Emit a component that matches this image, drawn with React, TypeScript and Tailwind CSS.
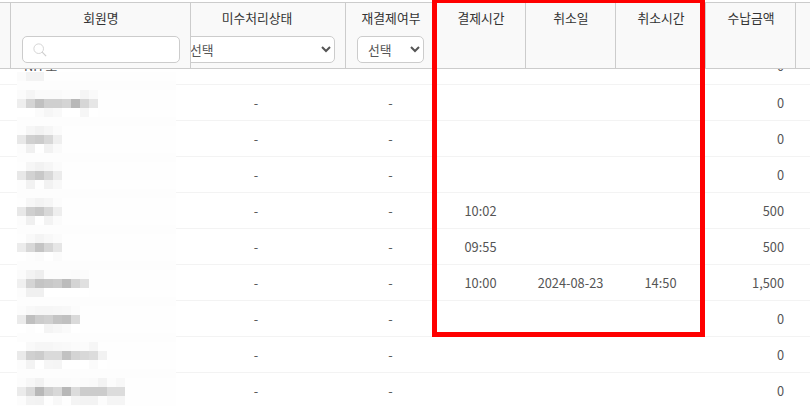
const cols = "grid grid-cols-[10px_180px_155px_90px_90px_90px_90px_90px_15px]";

type Row = { pay?: string; cancelDate?: string; cancelTime?: string; amount: string };

const rows: Row[] = [
  { amount: "0" },
  { amount: "0" },
  { amount: "0" },
  { pay: "10:02", amount: "500" },
  { pay: "09:55", amount: "500" },
  { pay: "10:00", cancelDate: "2024-08-23", cancelTime: "14:50", amount: "1,500" },
  { amount: "0" },
  { amount: "0" },
  { amount: "0" },
];

const mosaic: string[][][] = [
  [["fb","f5","fa","fa","fa","fc","fc","f5","fa"],["ee","d4","c0","cf","cf","d4","b8","d6","e6"],["ff","ff","fb","f6","f9","ff","ff","f6","ff"]],
  [["fd","f6","f2","f6","fb"],["e8","d0","cc","d8","ef"],["fc","f0","ff","f2","fa"]],
  [["fe","f6","f2","f6","fb"],["e8","d2","c8","d8","ec"],["fd","f2","fe","f2","f8"]],
  [["fe","f7","f3","f6","fc"],["e8","cf","c8","d8","ee"],["fc","f0","ff","f3","fb"]],
  [["fe","f9","f4","f8","fb"],["ec","d8","c4","d6","e6"],["ff","fd","fb","ff","fb"]],
  [["fb","f3","ee","fc","fc","fc","fb","fc"],["f0","d4","c4","c8","cc","bc","d4","e0"],["fc","f0","f0","ff","ff","ff","ff","ff"]],
  [["fc","f8","f6","f6","f7","f8","fc"],["eb","bf","cc","d0","c4","c0","da"],["ff","fd","ff","f4","f7","fa","ff"]],
  [["ff","f9","f6","f6","f8","f9","fb","fb","f6","fe"],["ea","d0","cc","da","da","c2","d4","d8","dc","f2"],["fc","f3","ff","f6","f5","ff","ff","ff","fb","ff"]],
  [["fc","f7","f2","fb","fb","fb","fc","fb","fa","f3","fc","f8"],["eb","da","b8","cf","d8","b8","dc","cc","cc","cc","dc","dc"],["fc","f3","f2","fe","f8","fe","f4","f3","f3","fc","f5","f5"]],
];

const gray = (c: string) => `#${c}${c}${c}`;

function Mosaic() {
  return (
    <svg className="absolute left-0 top-0" width="190" height="337" viewBox="0 69 190 337" shapeRendering="crispEdges">
      <rect x="17" y="72" width="159" height="334" fill="#fefefe" fillOpacity="0.6" />
      {["fb", "f3", "f3"].map((c, i) => (
        <rect key={i} x={17 + 9 * i} y="72" width="9" height="9" fill={gray(c)} />
      ))}
      {Array.from({ length: 9 }, (_, r) => (
        <rect key={r} x="17" y={81 + 36 * r} width="159" height="9" fill="#fdfdfd" />
      ))}
      {mosaic.map((row, r) =>
        row.map((line, l) =>
          line.map((c, i) => (
            <rect key={`${r}-${l}-${i}`} x={17 + 9 * i} y={90 + 36 * r + 9 * l} width="9" height="9" fill={gray(c)} />
          ))
        )
      )}
    </svg>
  );
}

function SearchGlyph() {
  return (
    <svg width="14" height="14" viewBox="0 0 16 16" fill="none" stroke="#cfcfcf" strokeWidth="1">
      <circle cx="6.5" cy="6.5" r="5.5" />
      <path d="M10.5 10.5 15 15" strokeWidth="1.4" />
    </svg>
  );
}

function Head({ label, children, className = "" }: { label: string; children?: React.ReactNode; className?: string }) {
  return (
    <div className={`border-l border-[#cccccc] bg-[#f9f9f9] ${className}`}>
      <div className="h-[33px] pl-[1px] pt-[5px] text-center text-[12.8px] leading-[20px] text-[#333333]">{label}</div>
      {children}
    </div>
  );
}

const selectClass =
  "h-[27px] rounded-[5px] border border-[#cccccc] bg-white text-[12.8px] leading-[20px] text-[#555555]";

function Cell({ children, align = "center" }: { children?: React.ReactNode; align?: "center" | "right" }) {
  return (
    <div className={`flex items-center ${align === "right" ? "justify-end pr-[11px]" : "justify-center pl-[1px]"}`}>{children}</div>
  );
}

export default function App() {
  return (
    <div
      className="relative h-[406px] w-[810px] overflow-hidden bg-white pt-[2px]"
      style={{ fontFamily: '"Noto Sans CJK KR", "Noto Sans", sans-serif' }}
    >
      <div className={`${cols} h-[67px] border-y border-[#cccccc] bg-[#f9f9f9]`}>
        <div />
        <Head label="회원명" className="relative z-10">
          <div className="ml-[11px] mr-[10px] flex h-[27px] items-center rounded-[5px] border border-[#cccccc] bg-white pl-[10px]">
            <SearchGlyph />
          </div>
        </Head>
        <Head label="미수처리상태" className="overflow-hidden [&>div:first-child]:pr-[23px]">
          <select className={`${selectClass} -ml-[12px] w-[156px] pl-[6px]`}>
            <option>선택</option>
          </select>
        </Head>
        <Head label="재결제여부">
          <div className="pl-[11px] pr-[11px]">
            <select className={`${selectClass} w-[67px] pl-[6px]`}>
              <option>선택</option>
            </select>
          </div>
        </Head>
        <Head label="결제시간" />
        <Head label="취소일" />
        <Head label="취소시간" />
        <Head label="수납금액" />
        <Head label="" />
      </div>

      <div className="relative text-[12.8px] text-[#555555]">
        <div className={`${cols} h-[16px] auto-rows-[15px] items-end overflow-hidden border-b border-[#f3f3f3]`}>
          <div />
          <div className="flex h-[36px] items-center pl-[14px]">NH 호</div>
          <div />
          <div />
          <div />
          <div />
          <div />
          <div className="flex h-[36px] items-center justify-end pr-[11px]">0</div>
          <div />
        </div>
        {rows.map((r, i) => (
          <div key={i} className={`${cols} h-[36px] border-b border-[#f3f3f3]`}>
            <div />
            <div />
            <div className="flex items-center justify-center pr-[23px]">-</div>
            <Cell>-</Cell>
            <Cell>{r.pay}</Cell>
            <Cell>{r.cancelDate}</Cell>
            <Cell>{r.cancelTime}</Cell>
            <Cell align="right">{r.amount}</Cell>
            <div />
          </div>
        ))}
        <Mosaic />
      </div>

      <div className="pointer-events-none absolute left-[432px] top-[-2px] h-[339px] w-[273px] border-[5px] border-[#ff0000]" />
    </div>
  );
}
